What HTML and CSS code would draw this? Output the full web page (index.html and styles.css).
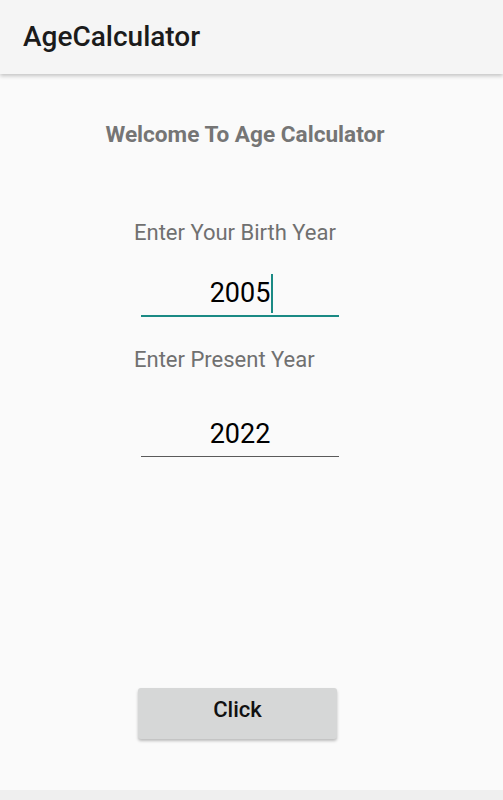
FILE: index.html
```html
<!DOCTYPE html>
<html lang="en">
<head>
    <meta charset="UTF-8">
    <meta name="viewport" content="width=device-width, initial-scale=1.0">
    <link rel="stylesheet" href="styles.css">
    <title>AgeCalculator</title>
</head>
<body>
    <header class="app-bar">
        <h1 class="app-title">AgeCalculator</h1>
    </header>

    <main class="content">
        <h2 class="welcome">Welcome To Age Calculator</h2>

        <p class="label label-birth">Enter Your Birth Year</p>
        <div class="field field-focused">2005<span class="caret"></span></div>

        <p class="label label-present">Enter Present Year</p>
        <div class="field field-present">2022</div>

        <button class="calc-button" type="button">Click</button>
    </main>

    <div class="nav-edge"></div>
</body>
</html>
```

FILE: styles.css
```css
html, body {
    margin: 0;
    padding: 0;
}

body {
    font-family: Roboto, "Liberation Sans", sans-serif;
    background: #fafafa;
    color: #000;
    width: 503px;
    height: 800px;
    display: flex;
    flex-direction: column;
    overflow: hidden;
}

.app-bar {
    height: 74px;
    flex-shrink: 0;
    background: #f5f5f5;
    display: flex;
    align-items: center;
    padding-left: 23px;
    box-shadow: 0 2px 4px rgba(0, 0, 0, 0.22);
    position: relative;
    z-index: 1;
}

.app-title {
    margin: 0;
    font-size: 28px;
    font-weight: 500;
    color: #1b1b1b;
    line-height: 32px;
}

.content {
    flex-grow: 1;
    display: flex;
    flex-direction: column;
}

.welcome {
    margin: 48px 0 0 0;
    padding-right: 13px;
    text-align: center;
    font-size: 22.6px;
    line-height: 26px;
    font-weight: 700;
    color: #757575;
}

.label {
    margin: 0;
    margin-left: 134px;
    font-size: 22px;
    line-height: 26px;
    color: #707070;
}

.label-birth {
    margin-top: 72px;
}

.label-present {
    margin-top: 30px;
}

.field {
    width: 198px;
    margin-left: 141px;
    text-align: center;
    font-size: 27px;
    line-height: 39px;
    color: #000;
    padding-bottom: 2px;
    border-bottom: 1px solid #5a5a5a;
}

.field-focused {
    margin-top: 28px;
    border-bottom: 2px solid #1a8a84;
}

.field-present {
    margin-top: 42px;
}

.caret {
    display: inline-block;
    width: 2px;
    height: 39px;
    margin-left: 1px;
    margin-right: -3px;
    vertical-align: top;
    background: #1a8a84;
}

.calc-button {
    margin: 231px 0 0 138px;
    width: 199px;
    height: 51px;
    padding: 0 0 8px 0;
    border: none;
    border-radius: 3px;
    background: #d6d7d7;
    box-shadow: 0 2px 3px rgba(0, 0, 0, 0.25);
    font-family: Roboto, "Liberation Sans", sans-serif;
    font-size: 22px;
    font-weight: 500;
    color: #111;
    cursor: pointer;
}

.nav-edge {
    height: 10px;
    flex-shrink: 0;
    background: #efefef;
}
```
